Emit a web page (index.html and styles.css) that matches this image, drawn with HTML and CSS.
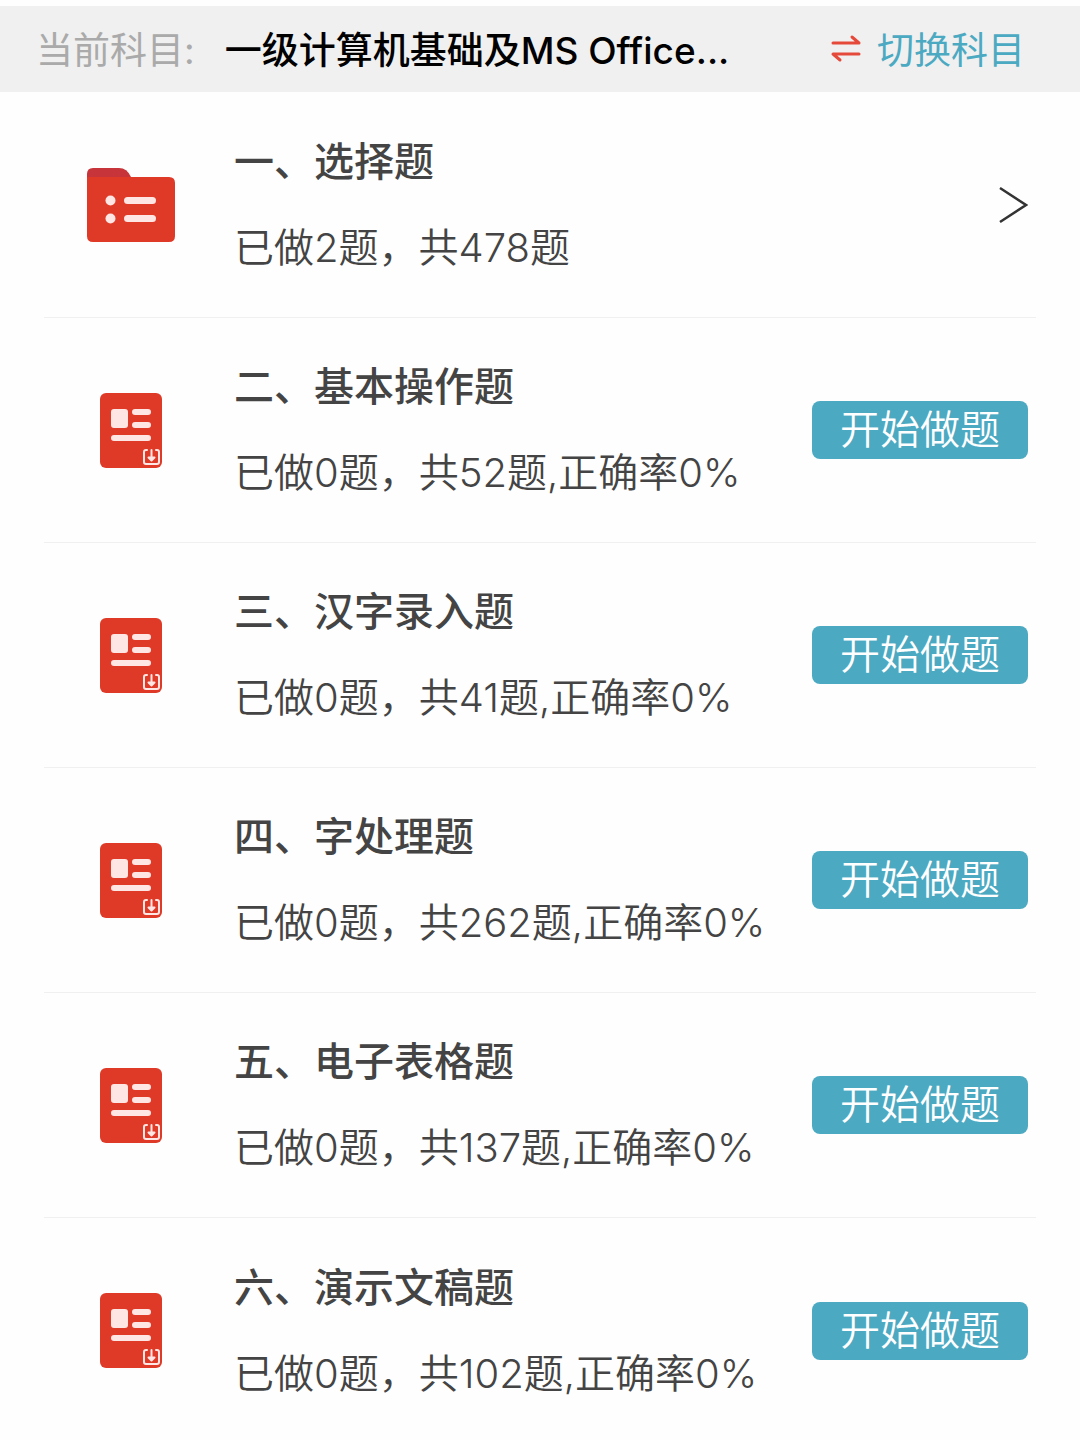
FILE: index.html
```html
<!DOCTYPE html>
<html lang="zh-CN">
<head>
  <meta charset="UTF-8">
  <meta name="viewport" content="width=device-width, initial-scale=1.0">
  <title>题库</title>
  <link rel="stylesheet" href="styles.css">
</head>
<body>

  <!-- shared icons -->
  <svg class="sprite" aria-hidden="true">
    <symbol id="icon-paper" viewBox="0 0 62 75">
      <rect width="62" height="75" rx="6" fill="#de3a27"/>
      <g fill="#fde6e4">
        <rect x="11" y="16" width="17" height="19" rx="3"/>
        <rect x="32" y="16" width="19" height="6" rx="3"/>
        <rect x="32" y="29" width="19" height="6" rx="3"/>
        <rect x="11" y="42" width="40" height="6" rx="3"/>
      </g>
      <g fill="none" stroke="#fde6e4" stroke-width="2" stroke-linecap="round" stroke-linejoin="round">
        <path d="M47 57h-1q-2 0-2 2v10q0 2 2 2h11q2 0 2-2v-10q0-2-2-2h-1"/>
        <path d="M51.500 57v9"/>
        <path d="M48.500 64.500h6l-3 3z" fill="#fde6e4"/>
      </g>
    </symbol>
  </svg>

  <header class="subject-bar">
    <span class="subject-label">当前科目:</span>
    <span class="subject-name">一级计算机基础及MS Office...</span>
    <a class="switch" href="#">
      <svg class="switch-icon" viewBox="0 0 30 30" aria-hidden="true">
        <path d="M2 10h26l-7-6M28 21H2l7 6" fill="none" stroke="#e5493a" stroke-width="3" stroke-linecap="round" stroke-linejoin="round"/>
      </svg>
      <span>切换科目</span>
    </a>
  </header>

  <main>
    <ul class="list">
      <li class="row">
        <div class="icon">
          <svg class="folder" viewBox="0 0 88 74" aria-hidden="true">
            <path d="M0 16V6q0-6 6-6h26q8 0 12 9v7z" fill="#c7353a"/>
            <path d="M0 9h82q6 0 6 6v53q0 6-6 6H6q-6 0-6-6z" fill="#de3a27"/>
            <g fill="#fde6e4">
              <circle cx="23.500" cy="32.500" r="5"/>
              <circle cx="23.500" cy="50.500" r="5"/>
              <rect x="37" y="29" width="32" height="7" rx="3.500"/>
              <rect x="37" y="47" width="32" height="7" rx="3.500"/>
            </g>
          </svg>
        </div>
        <div class="info">
          <h2>一、选择题</h2>
          <p>已做2题，共478题</p>
        </div>
        <a class="more" href="#" aria-label="一、选择题">
          <svg class="arrow" viewBox="0 0 30 38" aria-hidden="true">
            <path d="M2 2l26 17L2 36" fill="none" stroke="#333" stroke-width="2.500"/>
          </svg>
        </a>
      </li>
      <li class="row">
        <div class="icon"><svg class="paper" aria-hidden="true"><use href="#icon-paper"/></svg></div>
        <div class="info">
          <h2>二、基本操作题</h2>
          <p>已做0题，共52题,正确率0%</p>
        </div>
        <button class="start" type="button">开始做题</button>
      </li>
      <li class="row">
        <div class="icon"><svg class="paper" aria-hidden="true"><use href="#icon-paper"/></svg></div>
        <div class="info">
          <h2>三、汉字录入题</h2>
          <p>已做0题，共41题,正确率0%</p>
        </div>
        <button class="start" type="button">开始做题</button>
      </li>
      <li class="row">
        <div class="icon"><svg class="paper" aria-hidden="true"><use href="#icon-paper"/></svg></div>
        <div class="info">
          <h2>四、字处理题</h2>
          <p>已做0题，共262题,正确率0%</p>
        </div>
        <button class="start" type="button">开始做题</button>
      </li>
      <li class="row">
        <div class="icon"><svg class="paper" aria-hidden="true"><use href="#icon-paper"/></svg></div>
        <div class="info">
          <h2>五、电子表格题</h2>
          <p>已做0题，共137题,正确率0%</p>
        </div>
        <button class="start" type="button">开始做题</button>
      </li>
      <li class="row">
        <div class="icon"><svg class="paper" aria-hidden="true"><use href="#icon-paper"/></svg></div>
        <div class="info">
          <h2>六、演示文稿题</h2>
          <p>已做0题，共102题,正确率0%</p>
        </div>
        <button class="start" type="button">开始做题</button>
      </li>
    </ul>
  </main>

</body>
</html>
```
FILE: styles.css
```css
:root {
  --red: #de3a27;
  --teal: #4ba9c2;
  --text: #444;
}

* {
  box-sizing: border-box;
}

body {
  margin: 0;
  padding-top: 6px;
  background: #fefefe;
  color: var(--text);
  font-family: Inter, "Noto Sans CJK SC", sans-serif;
  font-size: 40px;
}

a {
  color: inherit;
  text-decoration: none;
}

.sprite {
  display: none;
}

.subject-bar {
  display: flex;
  align-items: center;
  height: 86px;
  padding: 0 55px 3px 36px;
  background: #f0f0f0;
  font-size: 37px;
  white-space: nowrap;
}

.subject-label {
  margin-right: 30px;
  color: #aaa;
}

.subject-name {
  flex: 1;
  color: #000;
  font-weight: 500;
}

.switch {
  display: flex;
  align-items: center;
  gap: 16px;
  color: var(--teal);
}

.switch-icon {
  width: 30px;
  height: 30px;
}

.list {
  margin: 0;
  padding: 1px 44px 0;
  list-style: none;
}

.row {
  display: flex;
  align-items: center;
  height: 225px;
  padding-right: 8px;
  border-bottom: 1px solid #f0f0f0;
}

.row:last-child {
  border-bottom: none;
}

.icon {
  display: flex;
  justify-content: center;
  width: 174px;
  margin-right: 16px;
}

.folder {
  width: 88px;
  height: 74px;
}

.paper {
  width: 62px;
  height: 75px;
}

.info {
  flex: 1;
  white-space: nowrap;
}

.info h2,
.info p {
  margin: 0;
  font-size: 40px;
  line-height: 60px;
}

.info h2 {
  margin-bottom: 26px;
  font-weight: 500;
}

.info p {
  font-weight: 350;
}

.arrow {
  display: block;
  width: 30px;
  height: 38px;
}

.start {
  width: 216px;
  height: 58px;
  padding: 0;
  border: none;
  border-radius: 8px;
  background: var(--teal);
  color: #fff;
  font-family: inherit;
  font-size: 40px;
  font-weight: 350;
  line-height: 58px;
  cursor: pointer;
}
```
